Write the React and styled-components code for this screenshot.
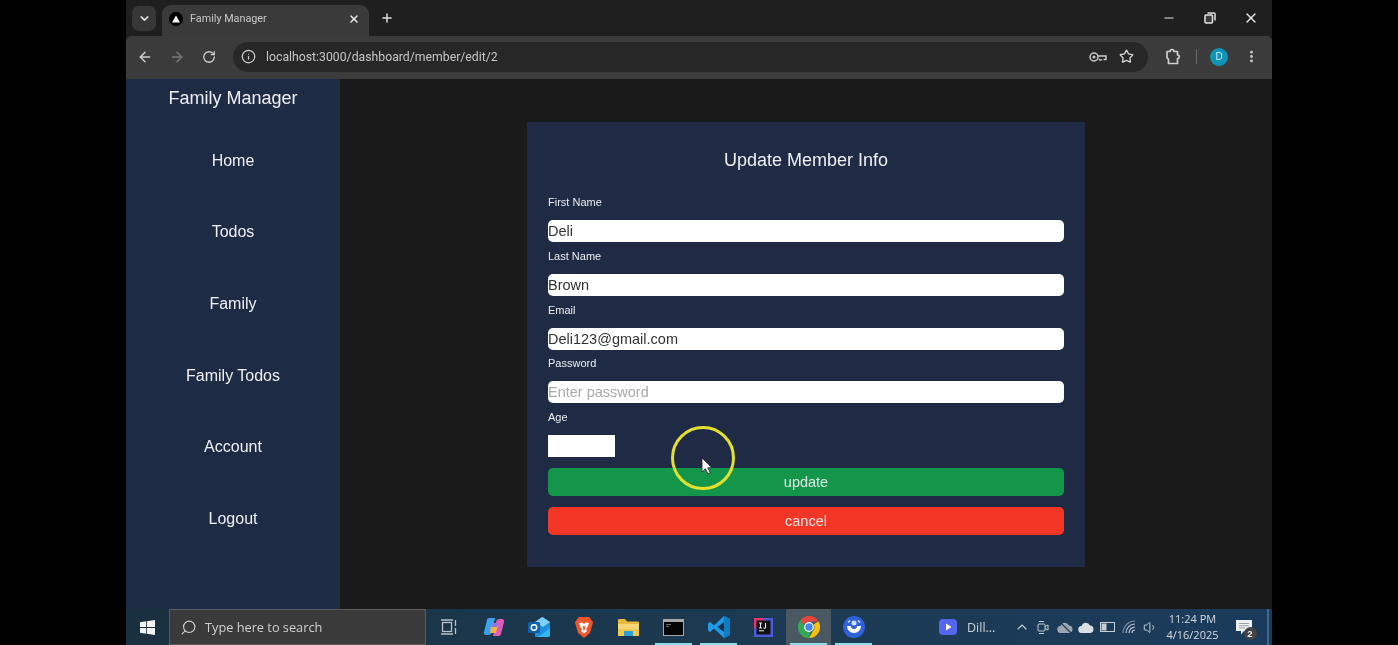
import styled, { createGlobalStyle } from 'styled-components';
import {
  ArrowLeft,
  ArrowRight,
  ChevronDown,
  ChevronUp,
  Info,
  MoreVertical,
  Plus,
  RotateCw,
  Search,
  Star,
  Volume1,
  X,
  Minus,
} from 'lucide-react';

const GlobalStyle = createGlobalStyle`
  html, body {
    margin: 0;
    height: 100%;
    background: #000;
    overflow: hidden;
  }
  * { box-sizing: border-box; }
`;

const Screen = styled.div`
  position: relative;
  width: 1146px;
  height: 645px;
  margin: 0 auto;
  display: flex;
  flex-direction: column;
  background: #1b1a1b;
  font-family: 'Liberation Sans', Arial, sans-serif;
  filter: blur(0.35px);
`;

/* browser chrome */
const TabStrip = styled.div`
  height: 36px;
  flex: none;
  display: flex;
  align-items: flex-end;
  background: #201f20;
  color: #e4e4e4;
`;
const TabMenu = styled.div`
  width: 24px;
  height: 25px;
  margin: 0 6px 5px 6px;
  border-radius: 7px;
  background: #383738;
  display: flex;
  align-items: center;
  justify-content: center;
`;
const Tab = styled.div`
  width: 207px;
  height: 31px;
  padding: 0 9px 4px 7px;
  display: flex;
  align-items: center;
  background: #3b3a3b;
  border-radius: 9px 9px 0 0;
`;
const Favicon = styled.span`
  width: 14px;
  height: 14px;
  border-radius: 50%;
  background: #000;
  display: flex;
  align-items: center;
  justify-content: center;
  margin-right: 7px;
`;
const TabTitle = styled.span`
  flex: 1;
  font-family: Roboto, sans-serif;
  font-size: 10.8px;
  color: #c8c8c8;
`;
const NewTab = styled.div`
  width: 36px;
  height: 36px;
  display: flex;
  align-items: center;
  justify-content: center;
`;
const WindowControls = styled.div`
  margin-left: auto;
  height: 36px;
  width: 125px;
  padding: 0 13px 0 15px;
  display: flex;
  align-items: center;
  justify-content: space-between;
`;
const Toolbar = styled.div`
  height: 43px;
  flex: none;
  display: flex;
  align-items: center;
  padding: 0 0 2px 3px;
  background: #3c3b3c;
  border-radius: 5px 5px 0 0;
  color: #c9c9c9;
`;
const NavButton = styled.div`
  width: 32px;
  display: flex;
  justify-content: center;
  color: ${(p) => (p.$off ? '#777' : '#cfcfcf')};
`;
const Omnibox = styled.div`
  width: 915px;
  height: 30px;
  margin-left: 8px;
  padding: 0 14px 0 5px;
  display: flex;
  align-items: center;
  background: #282728;
  border-radius: 15px;
`;
const SiteInfo = styled.span`
  width: 20px;
  height: 20px;
  margin-right: 8px;
  display: flex;
  align-items: center;
  justify-content: center;
`;
const Url = styled.span`
  flex: 1;
  font-family: Roboto, sans-serif;
  font-size: 12.25px;
  color: #c6c6c6;
`;
const OmniIcons = styled.div`
  display: flex;
  align-items: center;
  gap: 12px;
`;
const ToolbarRight = styled.div`
  flex: 1;
  display: flex;
  align-items: center;
  padding-left: 17px;
`;
const Divider = styled.span`
  width: 1px;
  height: 15px;
  margin: 0 13px 0 14px;
  background: #6a6a6a;
`;
const Avatar = styled.span`
  width: 18px;
  height: 18px;
  border-radius: 50%;
  background: #0f94b8;
  color: #c9eaf2;
  font-size: 10px;
  display: flex;
  align-items: center;
  justify-content: center;
  margin-right: 16px;
`;

/* app */
const Body = styled.div`
  flex: 1;
  min-height: 0;
  display: flex;
`;
const Sidebar = styled.aside`
  width: 214px;
  background: #1e2b45;
  color: #eef0f4;
  display: flex;
  flex-direction: column;
  align-items: center;
`;
const Brand = styled.h1`
  margin: 8px 0 16px;
  font-size: 18px;
  line-height: 22px;
  font-weight: 400;
`;
const NavList = styled.nav`
  display: flex;
  flex-direction: column;
  align-items: center;
`;
const NavLink = styled.a`
  height: 71.6px;
  display: flex;
  align-items: center;
  font-size: 16px;
  color: #eef0f4;
`;
const Main = styled.main`
  flex: 1;
  display: flex;
  justify-content: center;
  padding-top: 43px;
`;
const Card = styled.form`
  width: 558px;
  height: 445px;
  padding: 27px 21px 0;
  background: #1f2a45;
  color: #e8eaee;
`;
const Title = styled.h2`
  margin: 0 0 23px;
  height: 22px;
  line-height: 22px;
  text-align: center;
  font-size: 18px;
  font-weight: 400;
  color: #eef0f4;
`;
const Field = styled.div`
  height: 53.8px;
  display: flex;
  flex-direction: column;
`;
const Label = styled.label`
  height: 26px;
  padding-top: 1px;
  line-height: 15px;
  font-size: 11px;
  color: #eceef2;
`;
const Input = styled.input`
  width: ${(p) => (p.$short ? '67px' : '100%')};
  height: 22px;
  flex: none;
  padding: 0;
  border: 0;
  outline: 0;
  border-radius: ${(p) => (p.$short ? '0' : '5px')};
  background: #fff;
  font-family: 'Liberation Sans', Arial, sans-serif;
  font-size: 14.5px;
  color: #333;
  &::placeholder { color: #a9a9a9; }
`;
const ActionButton = styled.button`
  display: block;
  width: 100%;
  height: 28px;
  margin-bottom: 11px;
  border: 0;
  border-radius: 5px;
  background: ${(p) => p.$bg};
  color: #dfe8e6;
  font-family: 'Liberation Sans', Arial, sans-serif;
  font-size: 14.5px;
`;
const Actions = styled.div`
  margin-top: 5px;
`;

/* recording highlight */
const CursorRing = styled.div`
  position: absolute;
  left: 545px;
  top: 426px;
  width: 64px;
  height: 64px;
  border: 3px solid #e5e02e;
  border-radius: 50%;
`;
const Pointer = styled.svg`
  position: absolute;
  left: 575px;
  top: 457px;
`;

/* windows taskbar */
const Taskbar = styled.footer`
  height: 36px;
  flex: none;
  display: flex;
  align-items: center;
  background: linear-gradient(90deg, #1a3040, #1c3a52 55%, #1b3b5c);
  color: #dde3e8;
`;
const StartButton = styled.div`
  width: 43px;
  flex: none;
  display: flex;
  justify-content: center;
`;
const SearchBox = styled.div`
  width: 257px;
  height: 36px;
  flex: none;
  padding-left: 10px;
  display: flex;
  align-items: center;
  gap: 8px;
  background: #3a3a3b;
  border: 1px solid #5c5c5c;
  font-family: 'Open Sans', sans-serif;
  font-size: 12.75px;
  color: #cfcfcf;
`;
const Slot = styled.div`
  position: relative;
  width: 45px;
  height: 36px;
  flex: none;
  display: flex;
  align-items: center;
  justify-content: center;
  background: ${(p) => (p.$active ? '#4a5862' : 'transparent')};
  ${(p) =>
    p.$open &&
    `&::after {
      content: '';
      position: absolute;
      left: 4px;
      right: 4px;
      bottom: 0;
      height: 2px;
      background: #8fdcec;
    }`}
`;
const Running = styled.div`
  margin-left: 63px;
  width: 72px;
  flex: none;
  display: flex;
  align-items: center;
  gap: 10px;
  font-family: 'Open Sans', sans-serif;
  font-size: 12.5px;
  color: #c9d2da;
`;
const Tray = styled.div`
  flex: 1;
  display: flex;
  align-items: center;
  color: #c6ced5;
`;
const TrayIcon = styled.span`
  width: 21.5px;
  flex: none;
  display: flex;
  justify-content: center;
`;
const Clock = styled.div`
  width: 62px;
  flex: none;
  text-align: center;
  font-family: 'Open Sans', sans-serif;
  font-size: 11px;
  line-height: 16px;
  color: #d5dbe0;
`;
const Notify = styled.div`
  position: relative;
  width: 26px;
  flex: none;
  margin-left: 7px;
  display: flex;
  justify-content: center;
`;
const NotifyCount = styled.span`
  position: absolute;
  right: 0;
  bottom: -5px;
  width: 13px;
  height: 13px;
  border-radius: 50%;
  background: #444;
  color: #eee;
  font-size: 9.5px;
  font-weight: 700;
  text-align: center;
  line-height: 13px;
`;
const ShowDesktop = styled.span`
  margin-left: auto;
  margin-right: 3px;
  width: 2px;
  height: 36px;
  background: #3f6a8c;
`;

const KeyIcon = () => (
  <svg width="18" height="12" viewBox="0 0 18 12" fill="none" stroke="#c9c9c9" strokeWidth="1.5">
    <circle cx="5" cy="6" r="4" />
    <circle cx="5" cy="6" r="0.8" fill="#c9c9c9" />
    <path d="M9 5h8v3.500h-2.500M13 8.500c-1 1-2.500.5-3-.5" />
  </svg>
);

const ExtensionIcon = () => (
  <svg width="17" height="17" viewBox="0 0 17 17" fill="none" stroke="#cfcfcf" strokeWidth="1.7" strokeLinejoin="round">
    <path d="M2 3.500h3a2 2 0 0 1 4 0h3.500V7a1.800 1.800 0 0 1 0 3.600V15.500H3.500V12a2 2 0 0 0-1.500-2z" />
  </svg>
);

const RestoreIcon = () => (
  <svg width="12" height="12" viewBox="0 0 12 12" fill="none" stroke="#e4e4e4" strokeWidth="1.5">
    <rect x="1" y="3" width="7.500" height="8" rx="1" fill="#e4e4e4" fillOpacity="0.15" />
    <path d="M3.500 1h6.500a1 1 0 0 1 1 1v6.500" />
  </svg>
);

const WindowsLogo = () => (
  <svg width="15" height="15" viewBox="0 0 15 15" fill="#f2f4f6">
    <path d="M0 2.200 6.200 1.300v5.800H0zM7 1.200 15 0v7.100H7zM0 7.900h6.200v5.800L0 12.800zM7 7.900h8V15l-8-1.200z" />
  </svg>
);

const TaskView = () => (
  <svg width="17" height="16" viewBox="0 0 17 16" fill="none" stroke="#b7c0c7" strokeWidth="1.3">
    <rect x="2.500" y="3.500" width="9" height="9" />
    <path d="M1 1h12M1 15h12M15.500 1v6M15.500 9v6" />
  </svg>
);

const Copilot = () => (
  <svg width="22" height="22" viewBox="0 0 22 22">
    <path d="M6 2h6l-3 14c-.3 1.500-1.500 3-3.500 3H3c-1.500 0-2.500-1.500-2-3L4 4c.3-1.200 1-2 2-2z" fill="#36a4f0" />
    <path d="M16 20h-6l3-14c.3-1.500 1.500-3 3.500-3H19c1.500 0 2.500 1.500 2 3l-3 12c-.3 1.200-1 2-2 2z" fill="#e05ab8" />
    <path d="M8 9h7l-2 8H7z" fill="#f3b14a" />
    <path d="M9 7h6l-1 4H8z" fill="#8a78e8" />
  </svg>
);

const Outlook = () => (
  <svg width="22" height="20" viewBox="0 0 22 20">
    <path d="M7 5 15 0l7 5v13a2 2 0 0 1-2 2H7z" fill="#1d8fe0" />
    <path d="M7 5l7-5 8 5-7 5z" fill="#7fd0f6" />
    <path d="M10 20l12-9v7a2 2 0 0 1-2 2z" fill="#35b8f1" />
    <rect x="0" y="5" width="12" height="11" rx="1.500" fill="#0f5fb0" />
    <circle cx="6" cy="10.500" r="2.700" fill="none" stroke="#fff" strokeWidth="1.500" />
  </svg>
);

const Brave = () => (
  <svg width="18" height="21" viewBox="0 0 18 21">
    <path d="M4 0h10l2 2.500L18 5l-1 4-2 7-6 5-6-5-2-7-1-4 2-2.500z" fill="#f1562b" />
    <path d="M4 6l3-.5L9 7l2-1.500 3 .5-1.500 4-1.500 2 1 2-3 2.500L6 14.500l1-2-1.500-2z" fill="#fff" />
    <path d="M7.500 8.500 9 9.500l1.500-1-1 5h-1z" fill="#f1562b" />
  </svg>
);

const Folder = () => (
  <svg width="21" height="18" viewBox="0 0 21 18">
    <path d="M0 2a1 1 0 0 1 1-1h6l2 2.500h11a1 1 0 0 1 1 1V17a1 1 0 0 1-1 1H1a1 1 0 0 1-1-1z" fill="#e9b93e" />
    <rect x="0" y="6" width="21" height="5" fill="#f7d774" />
    <rect x="0" y="11" width="21" height="7" fill="#f2c94c" />
    <rect x="6" y="13" width="9" height="5" fill="#2d9fd8" />
  </svg>
);

const Terminal = () => (
  <svg width="21" height="17" viewBox="0 0 21 17">
    <rect width="21" height="17" fill="#a8a8a8" />
    <rect x="1" y="3" width="19" height="13" fill="#050505" />
    <path d="M3 5.500h5M3 7.500h3" stroke="#888" strokeWidth="0.8" />
  </svg>
);

const VsCode = () => (
  <svg width="22" height="22" viewBox="0 0 22 22">
    <path d="M16 0 22 3v16l-6 3L6 12.500 2 16l-2-1.500V7.500L2 6l4 3.500z" fill="#1f9ae8" />
    <path d="M16 6 9.500 11l6.500 5z" fill="#1b2f40" />
    <path d="M16 0 22 3v16l-6 3z" fill="#0f7cc4" />
  </svg>
);

const Intellij = () => (
  <svg width="19" height="19" viewBox="0 0 19 19">
    <rect width="19" height="19" fill="#4a5ad8" />
    <path d="M0 0h11L0 11z" fill="#e8356b" />
    <rect x="2.500" y="2.500" width="14" height="14" fill="#111" />
    <path d="M5 12.800h5" stroke="#eee" strokeWidth="1" />
    <path d="M5 5h3M6.500 5v5M5 10h3M11.500 5v4.500c0 1-1.500 1-2 .3" stroke="#eee" strokeWidth="1.100" fill="none" />
  </svg>
);

const Chrome = () => (
  <svg width="22" height="22" viewBox="0 0 22 22">
    <path d="M11 0a11 11 0 0 1 9.530 5.500H11a5.500 5.500 0 0 0-5.200 3.700L2.500 3.900A11 11 0 0 1 11 0z" fill="#e8453c" />
    <path d="M20.530 5.500A11 11 0 0 1 11 22l4.700-8.200a5.500 5.500 0 0 0 0-5.500z" fill="#f4c20d" />
    <path d="M11 22A11 11 0 0 1 2.500 3.900l4.700 8.200a5.500 5.500 0 0 0 5.600 3.100z" fill="#34a853" />
    <circle cx="11" cy="11" r="4.300" fill="#4285f4" stroke="#fff" strokeWidth="1.200" />
  </svg>
);

const Browser2 = () => (
  <svg width="22" height="22" viewBox="0 0 22 22">
    <circle cx="11" cy="11" r="11" fill="#2f62d8" />
    <path d="M4 10a7 7 0 0 0 14 0h-4a3 3 0 0 1-6 0z" fill="#fff" />
    <circle cx="11" cy="7" r="2.500" fill="#cfe0ff" />
    <path d="M5 6.500 7 4.500M17 6.500 15 4.500" stroke="#cfe0ff" strokeWidth="1.500" />
  </svg>
);

const Dill = () => (
  <svg width="18" height="16" viewBox="0 0 18 16">
    <rect width="18" height="16" rx="4" fill="#5566ee" />
    <path d="M7 4.500v7l5.500-3.500z" fill="#fff" />
  </svg>
);

const MeetIcon = () => (
  <svg width="12" height="15" viewBox="0 0 12 15" fill="none" stroke="#c6ced5" strokeWidth="1">
    <rect x="1" y="4" width="7" height="7" rx="1" />
    <path d="M8 6.500 11 5v5L8 8.500M2 1.500h5M2 13.500h5" />
  </svg>
);

const CloudIcon = ({ $muted }) => (
  <svg width="16" height="11" viewBox="0 0 16 11" fill={$muted ? '#9aa5ae' : '#d8dfe5'}>
    <path d="M4 11a3.500 3.500 0 0 1-.5-7A4.500 4.500 0 0 1 12 3.500 3.800 3.800 0 0 1 12.500 11z" />
    {$muted && <path d="M3 0l11 11" stroke="#1c3a52" strokeWidth="1.200" />}
  </svg>
);

const BatteryIcon = () => (
  <svg width="15" height="10" viewBox="0 0 15 10" fill="none" stroke="#c6ced5">
    <rect x="0.500" y="0.500" width="14" height="9" />
    <rect x="1.500" y="1.500" width="5" height="7" fill="#c6ced5" stroke="none" />
  </svg>
);

const WifiFan = () => (
  <svg width="14" height="14" viewBox="0 0 14 14" fill="none" stroke="#c6ced5" strokeWidth="1.100">
    <path d="M1 13A12 12 0 0 1 13 1" opacity="0.6" />
    <path d="M4 13a9 9 0 0 1 9-9" />
    <path d="M7 13a6 6 0 0 1 6-6" />
    <path d="M10 13a3 3 0 0 1 3-3" />
  </svg>
);

const NotifyIcon = () => (
  <svg width="16" height="15" viewBox="0 0 16 15">
    <path d="M0 0h16v11H8l-3 3.500V11H0z" fill="#eef0f2" />
    <path d="M3 3.500h10M3 5.800h10M3 8h6" stroke="#8b98a3" strokeWidth="0.9" />
  </svg>
);

const navItems = ['Home', 'Todos', 'Family', 'Family Todos', 'Account', 'Logout'];

const fields = [
  { id: 'first', label: 'First Name', value: 'Deli' },
  { id: 'last', label: 'Last Name', value: 'Brown' },
  { id: 'email', label: 'Email', value: 'Deli123@gmail.com' },
  { id: 'password', label: 'Password', placeholder: 'Enter password' },
];

const apps = [
  { id: 'task', icon: <TaskView /> },
  { id: 'copilot', icon: <Copilot /> },
  { id: 'outlook', icon: <Outlook /> },
  { id: 'brave', icon: <Brave /> },
  { id: 'files', icon: <Folder /> },
  { id: 'term', icon: <Terminal />, open: true },
  { id: 'code', icon: <VsCode />, open: true },
  { id: 'idea', icon: <Intellij /> },
  { id: 'chrome', icon: <Chrome />, open: true, active: true },
  { id: 'other', icon: <Browser2 />, open: true },
];

const App = () => {
  return (
    <Screen>
      <GlobalStyle />
      <TabStrip>
        <TabMenu>
          <ChevronDown size={13} strokeWidth={3} color="#ddd" />
        </TabMenu>
        <Tab>
          <Favicon>
            <svg width="8" height="8" viewBox="0 0 8 8">
              <path d="M4 .5 8 7.500H0z" fill="#fff" />
            </svg>
          </Favicon>
          <TabTitle>Family Manager</TabTitle>
          <X size={12} strokeWidth={3} color="#e8e8e8" />
        </Tab>
        <NewTab>
          <Plus size={14} strokeWidth={2.5} color="#e0e0e0" />
        </NewTab>
        <WindowControls>
          <Minus size={14} strokeWidth={2} color="#e4e4e4" />
          <RestoreIcon />
          <X size={16} strokeWidth={2} color="#e8e8e8" />
        </WindowControls>
      </TabStrip>
      <Toolbar>
        <NavButton><ArrowLeft size={16} strokeWidth={2.2} /></NavButton>
        <NavButton $off><ArrowRight size={16} strokeWidth={2.2} /></NavButton>
        <NavButton><RotateCw size={14} strokeWidth={2.2} /></NavButton>
        <Omnibox>
          <SiteInfo><Info size={15} strokeWidth={2} color="#d0d0d0" /></SiteInfo>
          <Url>localhost:3000/dashboard/member/edit/2</Url>
          <OmniIcons>
            <KeyIcon />
            <Star size={15} strokeWidth={2.2} color="#d0d0d0" />
          </OmniIcons>
        </Omnibox>
        <ToolbarRight>
          <ExtensionIcon />
          <Divider />
          <Avatar>D</Avatar>
          <MoreVertical size={15} strokeWidth={2.5} color="#cfcfcf" />
        </ToolbarRight>
      </Toolbar>

      <Body>
        <Sidebar>
          <Brand>Family Manager</Brand>
          <NavList>
            {navItems.map((item) => (
              <NavLink key={item}>{item}</NavLink>
            ))}
          </NavList>
        </Sidebar>
        <Main>
          <Card>
            <Title>Update Member Info</Title>
            {fields.map((f) => (
              <Field key={f.id}>
                <Label htmlFor={f.id}>{f.label}</Label>
                <Input id={f.id} defaultValue={f.value} placeholder={f.placeholder} />
              </Field>
            ))}
            <Field>
              <Label htmlFor="age">Age</Label>
              <Input id="age" $short />
            </Field>
            <Actions>
              <ActionButton type="button" $bg="#14964a">update</ActionButton>
              <ActionButton type="button" $bg="#f33625">cancel</ActionButton>
            </Actions>
          </Card>
        </Main>
      </Body>

      <Taskbar>
        <StartButton><WindowsLogo /></StartButton>
        <SearchBox>
          <Search size={17} strokeWidth={1.6} color="#d0d0d0" style={{ transform: 'scaleX(-1)' }} />
          Type here to search
        </SearchBox>
        {apps.map((a) => (
          <Slot key={a.id} $open={a.open} $active={a.active}>{a.icon}</Slot>
        ))}
        <Running>
          <Dill />
          Dill...
        </Running>
        <Tray>
          <TrayIcon><ChevronUp size={16} strokeWidth={1.6} /></TrayIcon>
          <TrayIcon><MeetIcon /></TrayIcon>
          <TrayIcon><CloudIcon $muted /></TrayIcon>
          <TrayIcon><CloudIcon /></TrayIcon>
          <TrayIcon><BatteryIcon /></TrayIcon>
          <TrayIcon><WifiFan /></TrayIcon>
          <TrayIcon><Volume1 size={15} strokeWidth={1.6} /></TrayIcon>
          <Clock>
            11:24 PM
            <br />
            4/16/2025
          </Clock>
          <Notify>
            <NotifyIcon />
            <NotifyCount>2</NotifyCount>
          </Notify>
          <ShowDesktop />
        </Tray>
      </Taskbar>

      <CursorRing />
      <Pointer width="12" height="18" viewBox="0 0 12 18">
        <path d="M1 1v14l3.500-3.300 2.500 5.300 2.300-1-2.500-5.200H11z" fill="#fff" stroke="#222" strokeWidth="0.8" />
      </Pointer>
    </Screen>
  );
};

export default App;
